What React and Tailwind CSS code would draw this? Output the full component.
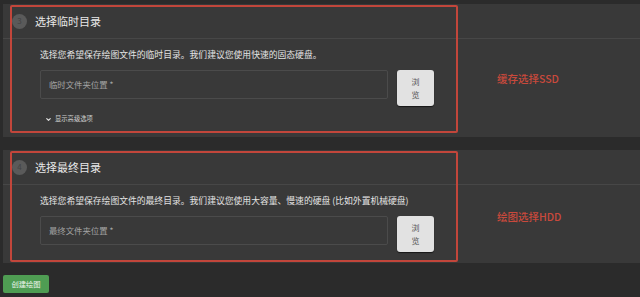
import { ChevronDown } from 'lucide-react'

const font = { fontFamily: '"Noto Sans CJK SC", "Noto Sans", sans-serif' }

function Step({ num, title, desc, placeholder, advanced, note, noteTop, boxH, height }) {
  return (
    <section className={`relative ml-[3px] bg-[#393939] ${height}`}>
      <div className="flex h-[35px] items-center border-b border-[#474747] pl-[9px]">
        <div className="flex h-[15px] w-[15px] items-center justify-center rounded-full bg-[#5a5a5a] text-[8px] text-[#434343]">
          {num}
        </div>
        <h2 className="ml-[8px] text-[11px] leading-none text-[#e8e8e8]">{title}</h2>
      </div>

      <div className="pl-[37px] pt-[10px]">
        <p className="h-[12px] text-[8.8px] leading-[12px] text-[#e4e4e4]">{desc}</p>
        <div className="mt-[9px] flex items-start">
          <div className="flex h-[29px] w-[348px] items-center rounded-[2px] border border-[#4b4b4b] pl-[8px] text-[8.4px] text-[#a4a4a4]">
            {placeholder}
          </div>
          <button className="ml-[9px] flex h-[36px] w-[37px] flex-col items-center justify-center rounded-[3px] bg-[#e2e2e2] text-[8px] leading-[13px] text-[#555] shadow-[0_1px_1px_rgba(0,0,0,0.6)]">
            <span>浏</span>
            <span>览</span>
          </button>
        </div>
        {advanced && (
          <div className="mt-[8px] flex items-center gap-[3px] pl-[5px] text-[6.3px] leading-[10px] text-[#cfcfcf]">
            <ChevronDown size={7} strokeWidth={4} className="text-[#e0e0e0]" />
            <span>显示高级选项</span>
          </div>
        )}
      </div>

      {/* annotation overlay */}
      <div className={`pointer-events-none absolute left-[7px] top-[1px] w-[448px] rounded-[2px] border-2 border-[#c2463b] ${boxH}`} />
      <span className={`absolute left-[494px] text-[10.5px] font-medium leading-none text-[#c9493c] ${noteTop}`}>{note}</span>
    </section>
  )
}

export default function App() {
  return (
    <div className="h-[297px] w-[640px] overflow-hidden bg-[#2b2b2b] pt-[4px]" style={font}>
      <Step
        num="3"
        title="选择临时目录"
        desc="选择您希望保存绘图文件的临时目录。我们建议您使用快速的固态硬盘。"
        placeholder="临时文件夹位置 *"
        advanced
        note="缓存选择SSD"
        noteTop="top-[70px]"
        boxH="h-[128px]"
        height="h-[133px]"
      />
      <div className="mt-[13px]">
        <Step
          num="4"
          title="选择最终目录"
          desc="选择您希望保存绘图文件的最终目录。我们建议您使用大容量、慢速的硬盘 (比如外置机械硬盘)"
          placeholder="最终文件夹位置 *"
          note="绘图选择HDD"
          noteTop="top-[62px]"
          boxH="h-[111px]"
          height="h-[113px]"
        />
      </div>
      <button className="ml-[3px] mt-[12px] h-[18px] w-[46px] rounded-[2px] bg-[#4f9d53] text-[7.3px] text-[#eef6ee]">
        创建绘图
      </button>
    </div>
  )
}
